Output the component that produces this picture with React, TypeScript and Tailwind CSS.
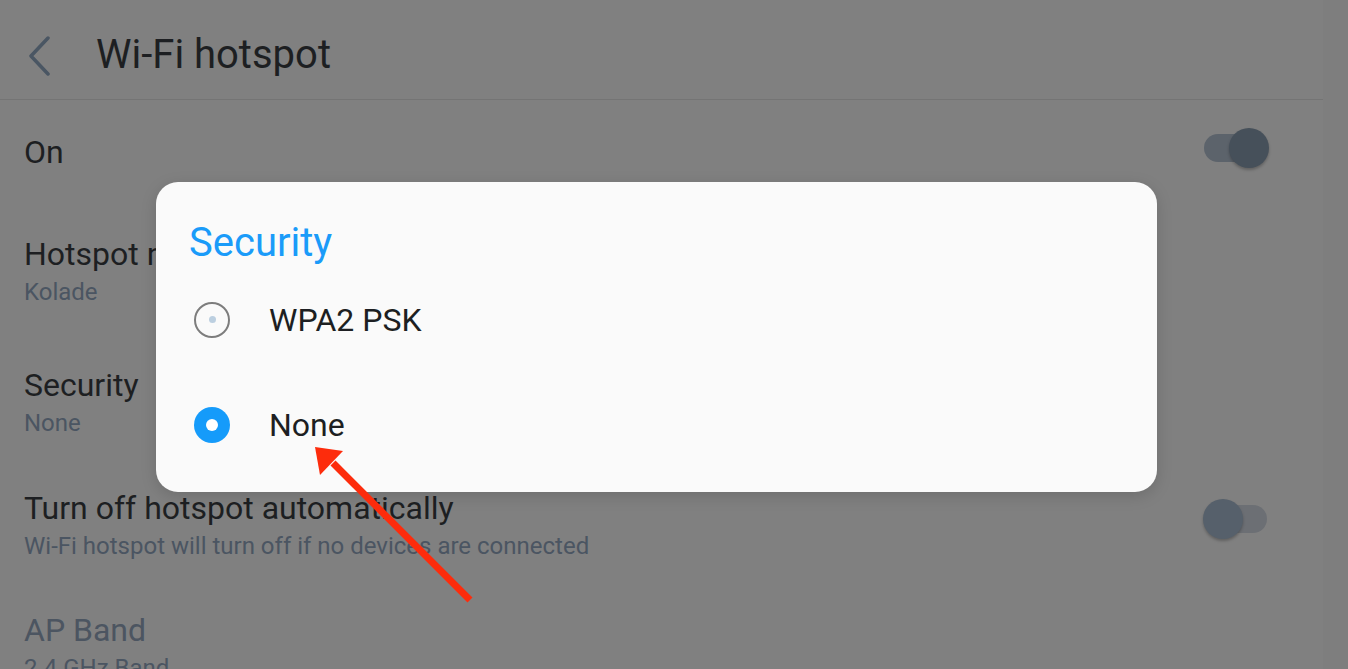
import React from 'react';

const Toggle: React.FC<{ on?: boolean }> = ({ on }) => (
  <div className={`relative w-[66px] h-[40px] flex items-center ${on ? 'mb-[8px]' : 'mb-[12px]'}`}>
    <div className={`h-[28px] rounded-full ${on ? 'bg-[#5c636b] w-[62px] ml-[2px]' : 'bg-[#6c6f74] ml-[13px] w-[52px]'}`} />
    <div
      className={`absolute top-0 w-[40px] h-[40px] rounded-full shadow-[0_2px_3px_rgba(0,0,0,0.25)] ${on ? 'left-[27px] bg-[#46505a]' : 'left-[1px] bg-[#56606b]'}`}
    />
  </div>
);

const Row: React.FC<{ title: string; sub?: string; h: string; dim?: boolean; toggle?: 'on' | 'off' }> = ({ title, sub, h, dim, toggle }) => (
  <div className={`flex items-center justify-between shrink-0 pl-[24px] pr-[55px] ${h}`}>
    <div className="flex flex-col">
      <span className={`text-[32px] leading-[38px] ${dim ? 'text-[#4c5561]' : 'text-[#1d1f22]'}`}>{title}</span>
      {sub && <span className="text-[24px] leading-[30px] mt-[4px] text-[#4b5562]">{sub}</span>}
    </div>
    {toggle && <Toggle on={toggle === 'on'} />}
  </div>
);

const App: React.FC = () => {
  return (
    <div className="relative w-[1348px] h-[669px] overflow-hidden bg-[#808080] flex font-['Roboto',sans-serif]">
      <div className="w-[1323px] flex flex-col shrink-0">
        {/* top bar */}
        <div className="h-[100px] flex items-center pt-[12px] border-b border-[#747474] shrink-0">
          <svg width="24" height="40" viewBox="0 0 24 40" className="ml-[27px]">
            <path d="M21 2 L4 20 L21 38" fill="none" stroke="#4a5663" strokeWidth="3.5" strokeLinecap="round" strokeLinejoin="round" />
          </svg>
          <span className="ml-[45px] text-[40px] leading-none text-[#1d1f22] mb-[2px]">Wi-Fi hotspot</span>
        </div>

        <Row title="On" h="h-[104px]" toggle="on" />
        <Row title="Hotspot name" sub="Kolade" h="h-[134px]" />
        <Row title="Security" sub="None" h="h-[128px]" />
        <Row title="Turn off hotspot automatically" sub="Wi-Fi hotspot will turn off if no devices are connected" h="h-[118px]" toggle="off" />
        <Row title="AP Band" sub="2.4 GHz Band" h="h-[126px]" dim />
      </div>
      <div className="flex-1 bg-[#7e7e7e]" />

      {/* dialog */}
      <div className="absolute left-[156px] top-[182px] w-[1001px] h-[310px] rounded-[22px] bg-[#fafafa] shadow-[0_4px_16px_rgba(0,0,0,0.15)] flex flex-col">
        <div className="h-[122px] flex items-center pl-[33px] pt-[2px]">
          <span className="text-[40px] leading-none text-[#1a9bf9] mb-[2px]">Security</span>
        </div>
        <div className="h-[75px] flex items-center pl-[38px] -mt-[22px]">
          <div className="w-[36px] h-[36px] rounded-full border-2 border-[#7d7d7d] flex items-center justify-center">
            <div className="w-[7px] h-[7px] rounded-full bg-[#bccfe0]" />
          </div>
          <span className="ml-[39px] text-[32px] leading-none text-[#1d1f22]">WPA2 PSK</span>
        </div>
        <div className="h-[75px] flex items-center pl-[38px] mt-[30px]">
          <div className="w-[36px] h-[36px] rounded-full bg-[#159bfa] flex items-center justify-center">
            <div className="w-[12px] h-[12px] rounded-full bg-white" />
          </div>
          <span className="ml-[39px] text-[32px] leading-none text-[#1d1f22]">None</span>
        </div>
      </div>

      {/* red arrow */}
      <svg className="absolute inset-0 pointer-events-none" width="1348" height="669" viewBox="0 0 1348 669">
        <line x1="470" y1="600" x2="333" y2="463" stroke="#fd2c0c" strokeWidth="7" />
        <polygon points="315,447 343,451 320,475" fill="#fd2c0c" />
      </svg>
    </div>
  );
};

export default App;
